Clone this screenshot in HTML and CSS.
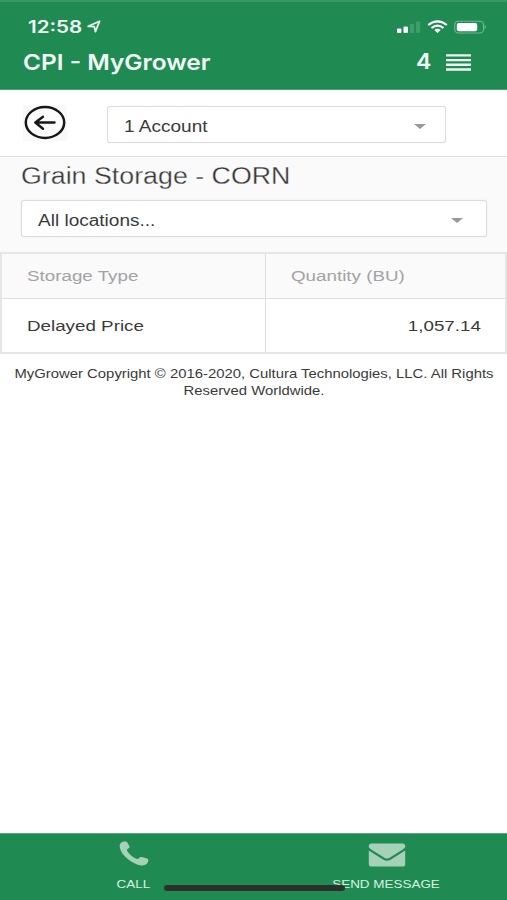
FILE: index.html
```html
<!DOCTYPE html>
<html lang="en">
<head>
<meta charset="utf-8">
<title>CPI - MyGrower</title>
<link rel="stylesheet" href="styles.css">
</head>
<body>
<div class="app">
  <header class="header">
    <div class="status">
      <span class="wide clock">12:58</span>
      <svg class="locate" width="14" height="13" viewBox="0 0 14 13"><path d="M1.2 6.3 12.6 1.2 8.4 11.6 7.3 6.6Z" fill="none" stroke="#e8f6ee" stroke-width="1.8" stroke-linejoin="round"/></svg>
      <svg class="indicators" width="92" height="16" viewBox="0 0 92 16">
        <g fill="#fff"><rect x="2" y="8.5" width="4.4" height="4.5" rx="1"/><rect x="8.5" y="6.5" width="4.4" height="6.5" rx="1"/><g opacity=".15"><rect x="14.8" y="4" width="4.2" height="9" rx="1"/><rect x="21" y="1.5" width="4.2" height="11.5" rx="1"/></g></g>
        <g fill="none" stroke="#fff" stroke-width="2.2"><path d="M33.2 5Q42.5 -2.3 51.8 5"/><path d="M36.5 8Q42.5 3.3 48.5 8"/></g><path d="M39.3 9.9Q42.5 7.5 45.7 9.9L42.5 12.9Z" fill="#fff"/>
        <rect x="59.7" y="1.2" width="28.8" height="11.8" rx="3.6" fill="none" stroke="#fff" stroke-opacity=".38" stroke-width="1.1"/><rect x="61.8" y="3.1" width="20.4" height="8.1" rx="2" fill="#fff"/><path d="M89.6 4.9Q92 7 89.6 9.1Z" fill="#fff" opacity=".45"/>
      </svg>
    </div>
    <div class="titlebar">
      <h1 class="wide brand">CPI - MyGrower</h1>
      <span class="wide count">4</span>
      <svg class="menu" width="25" height="17" viewBox="0 0 25 17"><path d="M0 1.4H25M0 6.1H25M0 10.8H25M0 15.5H25" stroke="#f0faf4" stroke-width="2.4"/></svg>
    </div>
  </header>
  <div class="account">
    <svg class="back" width="44" height="36" viewBox="0 0 44 36"><rect width="44" height="36" fill="#f9f9f9"/><ellipse cx="22" cy="17.5" rx="19.2" ry="15.4" fill="#fcfcfc" stroke="#181818" stroke-width="2.5"/><path d="M31.5 17.5H13M20 11.8 12.3 17.5 20 23.8" fill="none" stroke="#181818" stroke-width="2.4" stroke-linecap="round" stroke-linejoin="round"/></svg>
    <div class="select select-account"><span class="wide">1 Account</span><i class="caret"></i></div>
  </div>
  <main class="panel">
    <h2 class="wide heading">Grain Storage - CORN</h2>
    <div class="select select-location"><span class="wide">All locations...</span><i class="caret"></i></div>
    <div class="grid">
      <div class="cell head"><span class="wide storage">Storage Type</span></div>
      <div class="cell head"><span class="wide quantity">Quantity (BU)</span></div>
      <div class="cell"><span class="wide delayed">Delayed Price</span></div>
      <div class="cell number"><span class="wide amount">1,057.14</span></div>
    </div>
  </main>
  <footer class="copyright"><span class="wide">MyGrower Copyright © 2016-2020, Cultura Technologies, LLC. All Rights<br>Reserved Worldwide.</span></footer>
  <nav class="tabs">
    <a class="tab"><svg width="30" height="26" viewBox="0 0 30 26"><path d="M5 .6C6.8.2 8 .9 8.8 2.3L10.4 5.2C10.9 6.3 10.2 7 8.9 7.8C7.7 8.6 7.8 9.2 8.6 10.5C10.6 13.5 13.4 15.9 16.8 17.6C18.2 18.3 18.9 18.3 19.8 17.3C20.7 16.2 21.5 15.6 22.8 16L27.2 17.3C28.8 17.8 29.5 18.2 29.3 19.4C28.9 22.3 27.3 23.7 24.6 24.3C21.8 24.9 18.5 24.2 14 21.6C6.8 17.4 2.4 12.6.9 6.8C.2 3.3 1.6 1.3 5 .6Z" fill="#a5d1b9"/></svg><span class="wide">CALL</span></a>
    <a class="tab"><svg width="38" height="26" viewBox="0 0 38 26"><path d="M.8 6V5Q.8 2.4 3.8 2.4H34.2Q37.2 2.4 37.2 5V6Q36.5 7.4 34.8 8.5L22.8 16Q19 19 15.2 16L3.2 8.5Q1.5 7.4.8 6Z" fill="#a5d1b9"/><path d="M.8 9.6 15 18.4Q19 21.3 23 18.4L37.2 9.6V23Q37.2 25.6 34.2 25.6H3.8Q.8 25.6.8 23Z" fill="#a5d1b9"/></svg><span class="wide">SEND MESSAGE</span></a>
    <div class="home-indicator"></div>
  </nav>
</div>
</body>
</html>
```

FILE: styles.css
```css
* { box-sizing: border-box; }
body { margin: 0; background: #fff; font-family: "Liberation Sans", Arial, sans-serif; color: #3a3a3a; }
.app { display: flex; flex-direction: column; width: 507px; height: 900px; overflow: hidden; }
.wide { display: inline-block; white-space: nowrap; transform: scaleX(1.22); transform-origin: left center; }
svg { display: block; flex: none; }

.header { height: 90px; background: #1f8b53; border-top: 2px solid #379865; border-bottom: 1px solid #4aa275; color: #f2fbf5; font-family: Inter, "Liberation Sans", sans-serif; }
.status { display: flex; height: 34px; padding: 14px 20px 0 28px; }
.clock { width: 59px; font-size: 17px; line-height: 22px; font-weight: 600; transform: scaleX(1.21); }
.locate { margin-top: 4px; }
.indicators { margin: 4px 0 0 auto; }
.titlebar { display: flex; height: 50px; padding: 10px 36px 0 23px; }
.brand { margin: 0 auto 0 0; font-size: 22px; line-height: 32px; font-weight: 600; transform: scaleX(1.11); }
.count { width: 30px; font-size: 21px; line-height: 32px; font-weight: 600; transform: scaleX(1.1); }
.menu { margin-top: 8px; }

.account { display: flex; height: 67px; padding: 15px 0 0 23px; border-bottom: 1px solid #dedede; }
.select { display: flex; align-items: center; justify-content: space-between; height: 37px; border: 1px solid #dcdcdc; border-radius: 3px; background: #fff; font-size: 15.6px; box-shadow: 0 0 1px #ddd; }
.select-account { width: 339px; margin: 1px 0 0 40px; padding: 4px 19px 0 16px; }
.caret { border: solid transparent; border-width: 5px 6px 0; border-top-color: #999; }

.panel { height: 197px; background: #fafafa; }
.heading { display: block; margin: 0 0 0 21px; height: 43px; width: 230px; font-size: 23.5px; line-height: 38px; font-weight: 400; color: #383838; -webkit-text-stroke: .3px #fafafa; transform: scaleX(1.14); }
.select-location { width: 466px; margin: 0 0 15px 21px; padding: 4px 23px 0 16px; }
.grid { display: grid; grid-template-columns: 264px 1fr; grid-template-rows: 45px 53px; border: 2px solid #e6e6e6; }
.cell { display: flex; align-items: center; padding: 0 24px 0 25px; font-size: 15.4px; background: #fff; }
.cell:nth-child(odd) { padding-left: 24.5px; border-right: 1px solid #dedede; }
.head { border-bottom: 1px solid #e0e0e0; background: #fafafa; color: #a3a3a3; }
.number { justify-content: flex-end; }
.amount { transform-origin: right center; }

.copyright { display: flex; justify-content: center; padding-top: 12px; font-size: 12.6px; line-height: 17px; text-align: center; }
.copyright .wide { transform: scaleX(1.18); transform-origin: center; }

.tabs { position: relative; display: grid; grid-template-columns: 253px 253px; height: 67px; margin-top: auto; padding: 7px 0 0 7px; background: #1f8b53; border-top: 1px solid #55a77c; color: #d9f0e3; }
.tab { display: flex; flex-direction: column; align-items: center; gap: 9px; font-size: 11.5px; line-height: 16px; }
.tab .wide { transform: scaleX(1.17); transform-origin: center; }
.home-indicator { position: absolute; left: 164px; top: 51px; width: 181px; height: 6px; border-radius: 3px; background: #2d302c; }
```
